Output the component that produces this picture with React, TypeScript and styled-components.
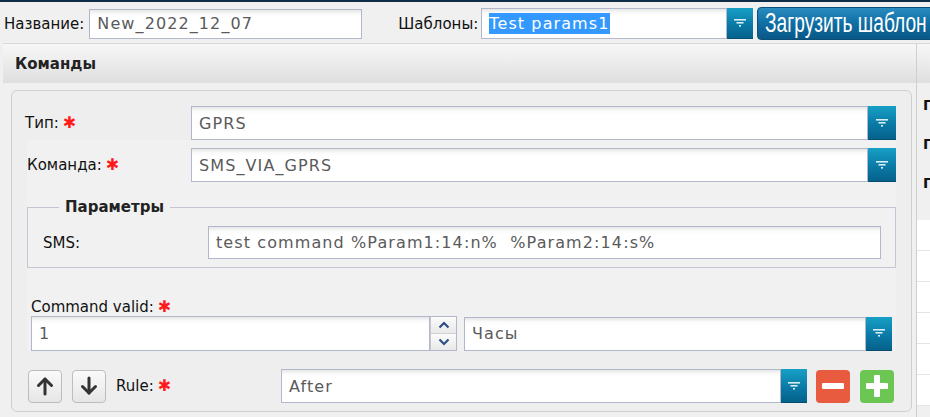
import React from "react";
import styled, { createGlobalStyle } from "styled-components";

const Global = createGlobalStyle`
  html, body { margin: 0; padding: 0; background: #f0f0f0; }
  body {
    font-family: "DejaVu Sans", Verdana, sans-serif;
    color: #111;
    width: 930px;
    height: 417px;
    overflow: hidden;
  }
  fieldset, legend { margin: 0; }
`;

const Page = styled.div`
  display: flex;
  flex-direction: column;
  width: 930px;
  height: 417px;
  overflow: hidden;
`;

const TopLine = styled.div`
  height: 2px;
  background: #0f2d46;
  flex: none;
`;

const Toolbar = styled.div`
  display: flex;
  align-items: center;
  height: 41px;
  padding: 2px 0 0 4px;
  box-sizing: border-box;
  flex: none;
  white-space: nowrap;
`;

const Label = styled.span<{ $ml?: number; $w?: number; $size?: number }>`
  font-size: ${(p) => p.$size ?? 15}px;
  color: #111;
  margin-left: ${(p) => p.$ml ?? 0}px;
  ${(p) => (p.$w ? `width: ${p.$w}px; flex: none;` : "")}
  display: inline-flex;
  align-items: center;
  white-space: nowrap;
`;

const Req = styled.span`
  color: #ff1a1a;
  font-size: 16px;
  margin-left: 4px;
  line-height: 1;
`;

const Field = styled.div<{ $w?: number; $h: number; $ml?: number }>`
  box-sizing: border-box;
  height: ${(p) => p.$h}px;
  ${(p) => (p.$w ? `width: ${p.$w}px; flex: none;` : "flex: 1; min-width: 0;")}
  margin-left: ${(p) => p.$ml ?? 0}px;
  border: 1px solid #b3b7cb;
  background: linear-gradient(#e6e6e6 0, #fbfbfb 4px, #ffffff 8px);
  display: flex;
  align-items: center;
  padding-left: 7px;
  font-size: 16px;
  letter-spacing: 1.1px;
  color: #5a5a5a;
  white-space: nowrap;
  overflow: hidden;
`;

const Selected = styled.span`
  background: #3399ff;
  color: #fff;
  padding: 1px 0;
`;

const Combo = styled.div<{ $w?: number; $h: number; $ml?: number }>`
  display: flex;
  height: ${(p) => p.$h}px;
  ${(p) => (p.$w ? `width: ${p.$w}px; flex: none;` : "flex: 1; min-width: 0;")}
  margin-left: ${(p) => p.$ml ?? 0}px;
`;

const Trigger = styled.div<{ $w: number }>`
  width: ${(p) => p.$w}px;
  flex: none;
  background: linear-gradient(#17a0c6, #0a7aa6 55%, #05628b);
  border-bottom: 1px solid #044e70;
  box-sizing: border-box;
  display: flex;
  align-items: center;
  justify-content: center;
`;

const FilterIcon = () => (
  <svg width="12" height="8" viewBox="0 0 12 8">
    <rect x="0" y="0" width="12" height="1.6" fill="#d9eef6" />
    <rect x="2.5" y="3" width="7" height="1.6" fill="#d9eef6" />
    <rect x="5" y="6" width="2" height="1.6" fill="#d9eef6" />
  </svg>
);

const LoadButton = styled.div`
  margin-left: 4px;
  height: 33px;
  width: 200px;
  flex: none;
  box-sizing: border-box;
  border: 1px solid #0b4f78;
  border-radius: 4px;
  background: linear-gradient(#2a8cc0, #0f6ea3 50%, #095887);
  display: flex;
  align-items: center;
  padding-left: 7px;
  overflow: hidden;
`;

const LoadText = styled.span`
  display: inline-block;
  color: #fff;
  font-family: "Liberation Sans", Arial, sans-serif;
  font-size: 27px;
  line-height: 1;
  transform: scaleX(0.71);
  transform-origin: left center;
  white-space: nowrap;
`;

const Main = styled.div`
  display: flex;
  flex: 1;
  min-height: 0;
`;

const LeftPane = styled.div`
  width: 913px;
  margin-left: 3px;
  flex: none;
  display: flex;
  flex-direction: column;
`;

const HeaderBar = styled.div`
  height: 40px;
  flex: none;
  box-sizing: border-box;
  border-top: 1px solid #d9d9d9;
  background: linear-gradient(#f7f7f7, #e9e9e9 60%, #dedede);
  display: flex;
  align-items: center;
  padding-left: 12px;
  font-weight: bold;
  font-size: 15px;
  color: #222;
`;

const Panel = styled.div`
  margin: 7px 4px 0 8px;
  height: 322px;
  box-sizing: border-box;
  border: 1px solid #cfcfcf;
  border-radius: 6px;
  background: #eeeeee;
  padding: 15px 0 0 13px;
  display: flex;
  flex-direction: column;
`;

const Row = styled.div<{ $mt?: number; $pl?: number; $pr?: number }>`
  display: flex;
  align-items: center;
  margin-top: ${(p) => p.$mt ?? 0}px;
  padding-left: ${(p) => p.$pl ?? 0}px;
  padding-right: ${(p) => p.$pr ?? 0}px;
`;

const Inner = styled.div`
  margin-left: 2px;
  width: 869px;
  background: #f1f1f1;
  display: flex;
  flex-direction: column;
`;

const Fieldset = styled.fieldset`
  margin-top: 16px;
  border: 1px solid #c4c6d4;
  padding: 10px 14px 8px 15px;
  min-width: 0;
  display: flex;
  flex-direction: column;
`;

const Legend = styled.legend`
  font-weight: bold;
  font-size: 15px;
  color: #222;
  padding: 0 6px;
  margin-left: 16px;
`;

const SpinBox = styled.div`
  width: 27px;
  flex: none;
  box-sizing: border-box;
  border: 1px solid #b3b7cb;
  border-left: none;
  display: flex;
  flex-direction: column;
  background: #f2f2f2;
`;

const SpinHalf = styled.div<{ $top?: boolean }>`
  flex: 1;
  display: flex;
  align-items: center;
  justify-content: center;
  border-left: 1px solid #c8c8c8;
  ${(p) => (p.$top ? "border-bottom: 1px solid #d0d0d0;" : "")}
  background: linear-gradient(#fbfbfb, #e9e9e9);
`;

const Chevron = ({ up }: { up?: boolean }) => (
  <svg width="12" height="8" viewBox="0 0 12 8">
    <path
      d={up ? "M1.5 6.5 L6 2 L10.5 6.5" : "M1.5 1.5 L6 6 L10.5 1.5"}
      fill="none"
      stroke="#2d4f85"
      strokeWidth="2.2"
    />
  </svg>
);

const MoveButton = styled.div<{ $ml?: number }>`
  width: 34px;
  height: 33px;
  flex: none;
  box-sizing: border-box;
  margin-left: ${(p) => p.$ml ?? 0}px;
  border: 1px solid #bdbdbd;
  border-radius: 4px;
  background: linear-gradient(#fafafa, #e6e6e6);
  display: flex;
  align-items: center;
  justify-content: center;
`;

const Arrow = ({ up }: { up?: boolean }) => (
  <svg width="18" height="20" viewBox="0 0 18 20">
    <g fill="none" stroke="#333" strokeWidth="3" strokeLinecap="round" strokeLinejoin="round">
      {up ? (
        <>
          <path d="M9 18 V3" />
          <path d="M2.5 9.5 L9 3 L15.5 9.5" />
        </>
      ) : (
        <>
          <path d="M9 2 V17" />
          <path d="M2.5 10.5 L9 17 L15.5 10.5" />
        </>
      )}
    </g>
  </svg>
);

const ActionButton = styled.div<{ $bg: string; $ml: number }>`
  width: 34px;
  height: 33px;
  flex: none;
  box-sizing: border-box;
  margin-left: ${(p) => p.$ml}px;
  border-radius: 4px;
  background: ${(p) => p.$bg};
  display: flex;
  align-items: center;
  justify-content: center;
`;

const RightPane = styled.div`
  flex: 1;
  border-left: 1px solid #cfcfcf;
  display: flex;
  flex-direction: column;
  overflow: hidden;
`;

const RightHeader = styled.div`
  height: 40px;
  flex: none;
  box-sizing: border-box;
  border-top: 1px solid #d9d9d9;
  background: linear-gradient(#f7f7f7, #e9e9e9 60%, #dedede);
`;

const RightLabels = styled.div`
  padding: 13px 0 0 6px;
  height: 137px;
  box-sizing: border-box;
  display: flex;
  flex-direction: column;
  gap: 21px;
`;

const RightLabel = styled.div`
  font-size: 14px;
  font-weight: bold;
  line-height: 18px;
  color: #111;
  white-space: nowrap;
`;

const GridRow = styled.div`
  height: 30px;
  flex: none;
  background: #fff;
  border-bottom: 1px solid #e4e4e4;
`;

export default function App() {
  return (
    <>
      <Global />
      <Page>
        <TopLine />
        <Toolbar>
          <Label>Название:</Label>
          <Field $w={273} $h={30} $ml={5}>
            New_2022_12_07
          </Field>
          <Label $ml={36}>Шаблоны:</Label>
          <Combo $w={272} $h={31} $ml={3}>
            <Field $h={31}>
              <Selected>Test params1</Selected>
            </Field>
            <Trigger $w={26}>
              <FilterIcon />
            </Trigger>
          </Combo>
          <LoadButton>
            <LoadText>Загрузить шаблон</LoadText>
          </LoadButton>
        </Toolbar>
        <Main>
          <LeftPane>
            <HeaderBar>Команды</HeaderBar>
            <Panel>
              <Row>
                <Label $w={166}>
                  Тип:<Req>✱</Req>
                </Label>
                <Combo $w={705} $h={34}>
                  <Field $h={34}>GPRS</Field>
                  <Trigger $w={28}>
                    <FilterIcon />
                  </Trigger>
                </Combo>
              </Row>
              <Inner>
                <Row $mt={8}>
                  <Label $w={164}>
                    Команда:<Req>✱</Req>
                  </Label>
                  <Combo $w={705} $h={34}>
                    <Field $h={34}>SMS_VIA_GPRS</Field>
                    <Trigger $w={28}>
                      <FilterIcon />
                    </Trigger>
                  </Combo>
                </Row>
                <Fieldset>
                  <Legend>Параметры</Legend>
                  <Row>
                    <Label $w={165}>SMS:</Label>
                    <Field $h={33}>test command %Param1:14:n%&nbsp; %Param2:14:s%</Field>
                  </Row>
                </Fieldset>
                <Row $mt={30} $pl={4}>
                  <Label>
                    Command valid:<Req>✱</Req>
                  </Label>
                </Row>
                <Row $mt={0} $pl={4} $pr={4}>
                  <Combo $w={426} $h={35}>
                    <Field $h={35}>1</Field>
                    <SpinBox>
                      <SpinHalf $top>
                        <Chevron up />
                      </SpinHalf>
                      <SpinHalf>
                        <Chevron />
                      </SpinHalf>
                    </SpinBox>
                  </Combo>
                  <Combo $h={34} $ml={7}>
                    <Field $h={34}>Часы</Field>
                    <Trigger $w={26}>
                      <FilterIcon />
                    </Trigger>
                  </Combo>
                </Row>
              </Inner>
              <Row $mt={18} $pl={3}>
                <MoveButton>
                  <Arrow up />
                </MoveButton>
                <MoveButton $ml={10}>
                  <Arrow />
                </MoveButton>
                <Label $w={165} $ml={10}>
                  Rule:<Req>✱</Req>
                </Label>
                <Combo $w={526} $h={34}>
                  <Field $h={34}>After</Field>
                  <Trigger $w={26}>
                    <FilterIcon />
                  </Trigger>
                </Combo>
                <ActionButton $bg="#e85b3e" $ml={9}>
                  <svg width="22" height="6" viewBox="0 0 22 6">
                    <rect x="0" y="0" width="22" height="6" rx="1" fill="#fff" />
                  </svg>
                </ActionButton>
                <ActionButton $bg="#6cc653" $ml={10}>
                  <svg width="22" height="22" viewBox="0 0 22 22">
                    <rect x="8" y="0" width="6" height="22" rx="1" fill="#fff" />
                    <rect x="0" y="8" width="22" height="6" rx="1" fill="#fff" />
                  </svg>
                </ActionButton>
              </Row>
            </Panel>
          </LeftPane>
          <RightPane>
            <RightHeader />
            <RightLabels>
              <RightLabel>Поле</RightLabel>
              <RightLabel>Поле</RightLabel>
              <RightLabel>Поле</RightLabel>
            </RightLabels>
            <GridRow />
            <GridRow />
            <GridRow />
            <GridRow />
            <GridRow />
            <GridRow />
          </RightPane>
        </Main>
      </Page>
    </>
  );
}
